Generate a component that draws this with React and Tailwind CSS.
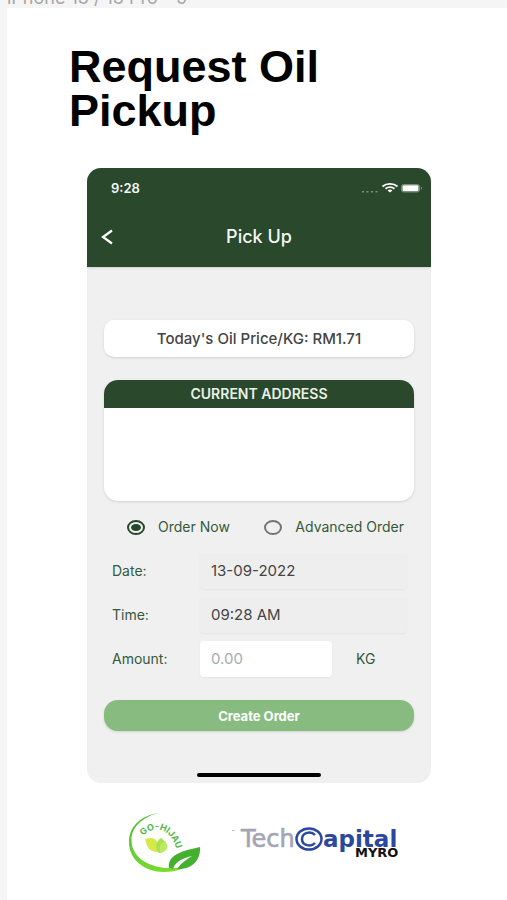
import { useState } from "react";

function StatusBar() {
  return (
    <div className="flex items-center justify-between pl-6 pr-2 h-10">
      <span className="text-[13px] leading-4 font-semibold">9:28</span>
      <svg width="64" height="12" viewBox="0 0 64 12" fill="none">
        <g fill="#7d937f">
          <rect x="3" y="9" width="2" height="1.5" />
          <rect x="7.500" y="9" width="2" height="1.5" />
          <rect x="12" y="9" width="2" height="1.5" />
          <rect x="16.500" y="9" width="2" height="1.5" />
        </g>
        <g stroke="#fff" strokeWidth="1.8">
          <path d="M23.500 4.500C27.500 1 34.500 1 38.500 4.500" />
          <path d="M26.500 6.800C29 4.600 33 4.600 35.500 6.800" />
        </g>
        <path d="M28.500 8.400C30 7.200 32 7.200 33.500 8.400L31 10.500Z" fill="#fff" />
        <rect x="42.500" y="2.500" width="18" height="7.500" rx="2" stroke="#76907a" />
        <rect x="43.500" y="3.300" width="16" height="6" rx="1" fill="#fff" />
        <path d="M62 4.800C63.300 5.200 63.300 7.200 62 7.600Z" fill="#8aa08c" />
      </svg>
    </div>
  );
}

function OrderRadio({ label, value, selected, onChange }) {
  return (
    <label className="flex items-center gap-[13px] whitespace-nowrap">
      <input
        type="radio"
        name="orderType"
        value={value}
        checked={selected === value}
        onChange={() => onChange(value)}
        className="appearance-none flex items-center justify-center w-[18px] h-[15px] rounded-[50%] border-2 border-[#757575] checked:border-[#25472b] checked:before:content-[''] checked:before:w-[10px] checked:before:h-[7px] checked:before:rounded-[50%] checked:before:bg-[#25472b]"
      />
      {label}
    </label>
  );
}

function FieldRow({ id, label, children }) {
  return (
    <div className="flex items-center h-9">
      <label htmlFor={id} className="w-[88px] shrink-0">
        {label}
      </label>
      {children}
    </div>
  );
}

function GoHijauLogo() {
  return (
    <svg width="76" height="64" viewBox="0 0 76 64" role="img" aria-label="Go Hijau">
      <defs>
        <linearGradient id="ring" x1="0" y1="0" x2="1" y2="1">
          <stop offset="0" stopColor="#4fb83a" />
          <stop offset="0.5" stopColor="#6fd431" />
          <stop offset="1" stopColor="#7fe01f" />
        </linearGradient>
        <path id="arc" d="M16 25C22 17 43 12 50 40" />
      </defs>
      <path
        d="M31 2C13 5 2 16 2 31C2 49 18 61 37 61C48 61 56 58 61 54C56 56.500 48 57.500 40 57C21 56 5 46 4.500 30C4 17 14 7 31 2Z"
        fill="url(#ring)"
      />
      <path
        d="M42 57C41 46 49 41 73 36C74 48 66 59 50 58C54 52 60 48 65 45C57 47 48 50 46 58Z"
        fill="#45b02f"
      />
      <path d="M18 28C27 25 33 29 31 41C22 41 20 36 18 28Z" fill="#d5e94b" />
      <path d="M34 27C41 32 41 42 32 42C27 37 29 30 34 27Z" fill="#a6e34c" />
      <path d="M38 30C43 36 40 41 33 41C32 35 34 32 38 30Z" fill="#bceb63" />
      <text
        fill="#55b83f"
        fontFamily="Inter, sans-serif"
        fontSize="9"
        fontWeight="700"
      >
        <textPath href="#arc">GO-HIJAU</textPath>
      </text>
    </svg>
  );
}

function TechCapitalLogo() {
  return (
    <svg width="172" height="44" viewBox="0 0 172 44" role="img" aria-label="TechCapital MYRO">
      <rect x="2" y="9" width="3" height="1" fill="#c2c2c8" />
      <g fontFamily="'DejaVu Sans', sans-serif" fontWeight="700">
        <text x="11" y="26" fontSize="24" fontWeight="400" fill="#a4a4b4" stroke="#a4a4b4" strokeWidth="0.6">
          Tech
        </text>
        <text x="93" y="26" fontSize="23" fill="#2b48a0">
          apital
        </text>
        <text x="125" y="36" fontSize="13" fill="#111">
          MYRO
        </text>
      </g>
      <ellipse cx="79" cy="18" rx="12.500" ry="10.500" fill="#fff" stroke="#2b48a0" strokeWidth="2.500" />
      <path d="M85 14C81 9.500 72 11.500 72 18C72 24.500 81 26.500 85 22" fill="none" stroke="#2b48a0" strokeWidth="2.500" />
    </svg>
  );
}

export default function App() {
  const [orderType, setOrderType] = useState("now");
  const [amount, setAmount] = useState("");

  return (
    <div className="min-h-screen bg-[#f5f5f5] pl-[7px] font-['Inter',sans-serif]">
      <div className="flex flex-col justify-end h-2 pb-[2px] overflow-hidden">
        <span className="block shrink-0 h-4 text-lg leading-4 text-[#a5a5a5] whitespace-nowrap">
          iPhone 13 / 13 Pro - 9
        </span>
      </div>
      <main className="bg-white min-h-[calc(100vh-8px)] pt-[37px] pb-6">
        <h1 className="pl-[62px] font-['Liberation_Sans',sans-serif] text-[45px] leading-11 font-bold text-black">
          Request Oil
          <br />
          Pickup
        </h1>

        <section className="ml-20 mr-[76px] mt-[35px] rounded-[14px] overflow-hidden bg-[#f0f0f0] text-sm leading-4 text-[#35593c]">
          <header className="bg-[#29482c] text-[#f3f7f3] h-[99px] shadow-sm">
            <StatusBar />
            <div className="grid grid-cols-[40px_1fr_40px] items-center h-[58px]">
              <button type="button" aria-label="Back" className="flex justify-center">
                <svg width="14" height="16" viewBox="0 0 14 16" fill="none">
                  <path d="M12 1.500L3 8L12 14.500" stroke="#fff" strokeWidth="2.200" />
                </svg>
              </button>
              <h2 className="text-center text-lg font-medium">Pick Up</h2>
            </div>
          </header>

          <div className="px-[17px] pt-[53px]">
            <p className="flex items-center justify-center h-[37px] rounded-[10px] bg-white shadow text-[15px] font-medium text-[#444]">
              Today's Oil Price/KG: RM1.71
            </p>

            <div className="mt-[23px] h-[121px] rounded-[14px] overflow-hidden bg-white shadow">
              <h3 className="flex items-center justify-center h-7 bg-[#29482c] text-[#e9f1e9] text-sm font-semibold">
                CURRENT ADDRESS
              </h3>
            </div>

            <div className="flex items-center justify-between mt-[18px] pl-[23px] pr-[10px]">
              <OrderRadio label="Order Now" value="now" selected={orderType} onChange={setOrderType} />
              <OrderRadio
                label="Advanced Order"
                value="advanced"
                selected={orderType}
                onChange={setOrderType}
              />
            </div>

            <div className="flex flex-col gap-2 mt-[18px] pl-2 pr-[7px]">
              <FieldRow id="date" label="Date:">
                <input
                  id="date"
                  readOnly
                  value="13-09-2022"
                  className="w-full min-w-0 h-9 px-[11px] pb-[2px] rounded bg-[#eee] shadow-xs text-[15px] text-[#444]"
                />
              </FieldRow>
              <FieldRow id="time" label="Time:">
                <input
                  id="time"
                  readOnly
                  value="09:28 AM"
                  className="w-full min-w-0 h-9 px-[11px] pb-[2px] rounded bg-[#eee] shadow-xs text-[15px] text-[#444]"
                />
              </FieldRow>
              <FieldRow id="amount" label="Amount:">
                <input
                  id="amount"
                  placeholder="0.00"
                  value={amount}
                  onChange={(e) => setAmount(e.target.value)}
                  className="flex-1 min-w-0 h-9 px-[11px] pb-[2px] rounded bg-white shadow-xs text-[15px] text-[#444] placeholder:text-[#a3adad]"
                />
                <span className="w-[75px] pl-6">KG</span>
              </FieldRow>
            </div>

            <button
              type="button"
              className="w-full h-[31px] mt-[23px] rounded-[14px] bg-[#88bb7f] shadow text-[13px] font-bold text-white"
            >
              Create Order
            </button>
          </div>

          <div className="w-[124px] h-1 mt-[42px] mb-[6px] mx-auto rounded-full bg-black" />
        </section>

        <footer className="flex items-center gap-[27px] pl-[120px] mt-7">
          <GoHijauLogo />
          <TechCapitalLogo />
        </footer>
      </main>
    </div>
  );
}
